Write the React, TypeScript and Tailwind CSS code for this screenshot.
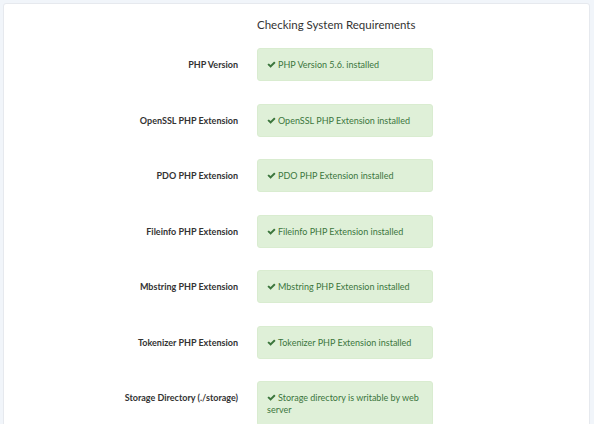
import React from 'react';

interface Requirement {
  label: string;
  message: string;
}

const requirements: Requirement[] = [
  { label: 'PHP Version', message: 'PHP Version 5.6. installed' },
  { label: 'OpenSSL PHP Extension', message: 'OpenSSL PHP Extension installed' },
  { label: 'PDO PHP Extension', message: 'PDO PHP Extension installed' },
  { label: 'Fileinfo PHP Extension', message: 'Fileinfo PHP Extension installed' },
  { label: 'Mbstring PHP Extension', message: 'Mbstring PHP Extension installed' },
  { label: 'Tokenizer PHP Extension', message: 'Tokenizer PHP Extension installed' },
  { label: 'Storage Directory (./storage)', message: 'Storage directory is writable by web server' },
];

// heavy "ok" check, font-awesome 4 style
const CheckIcon: React.FC = () => (
  <svg viewBox="0 0 1792 1792" className="mr-[2px] inline-block h-[9px] w-[9px] align-[-1px]" fill="currentColor">
    <path d="M1671 566q0 40-28 68l-724 724-136 136q-28 28-68 28t-68-28l-136-136-362-362q-28-28-28-68t28-68l136-136q28-28 68-28t68 28l294 295 656-657q28-28 68-28t68 28l136 136q28 28 28 68z" />
  </svg>
);

const App: React.FC = () => {
  return (
    <div className="min-h-[424px] bg-[#f1f5fa] pl-[3px] pr-[4px] pt-[3px] font-['Lato','Open_Sans',sans-serif] text-[#333]">
      <div className="h-[430px] overflow-hidden rounded-[3px] border border-[#e6e9ee] bg-white">
        {/* Title sits above the status column */}
        <h2 className="pl-[253px] pt-[13px] text-[11.5px] leading-[15px] font-normal text-[#333]">
          Checking System Requirements
        </h2>

        <div className="mt-[16px] flex flex-col gap-[22.5px]">
          {requirements.map(req => (
            <div key={req.label} className="flex items-start">
              <div className="w-[234px] pt-[11px] text-right text-[9px] leading-[12px] font-bold text-[#333]">
                {req.label}
              </div>
              <div className="ml-[19px] w-[176px] rounded-[3px] border border-[#d9ecd0] bg-[#dff0d8] px-[9px] pt-[10px] pb-[9px] text-[9px] leading-[12px] text-[#3c763d]">
                <CheckIcon />
                {req.message}
              </div>
            </div>
          ))}
        </div>
      </div>
    </div>
  );
};

export default App;
